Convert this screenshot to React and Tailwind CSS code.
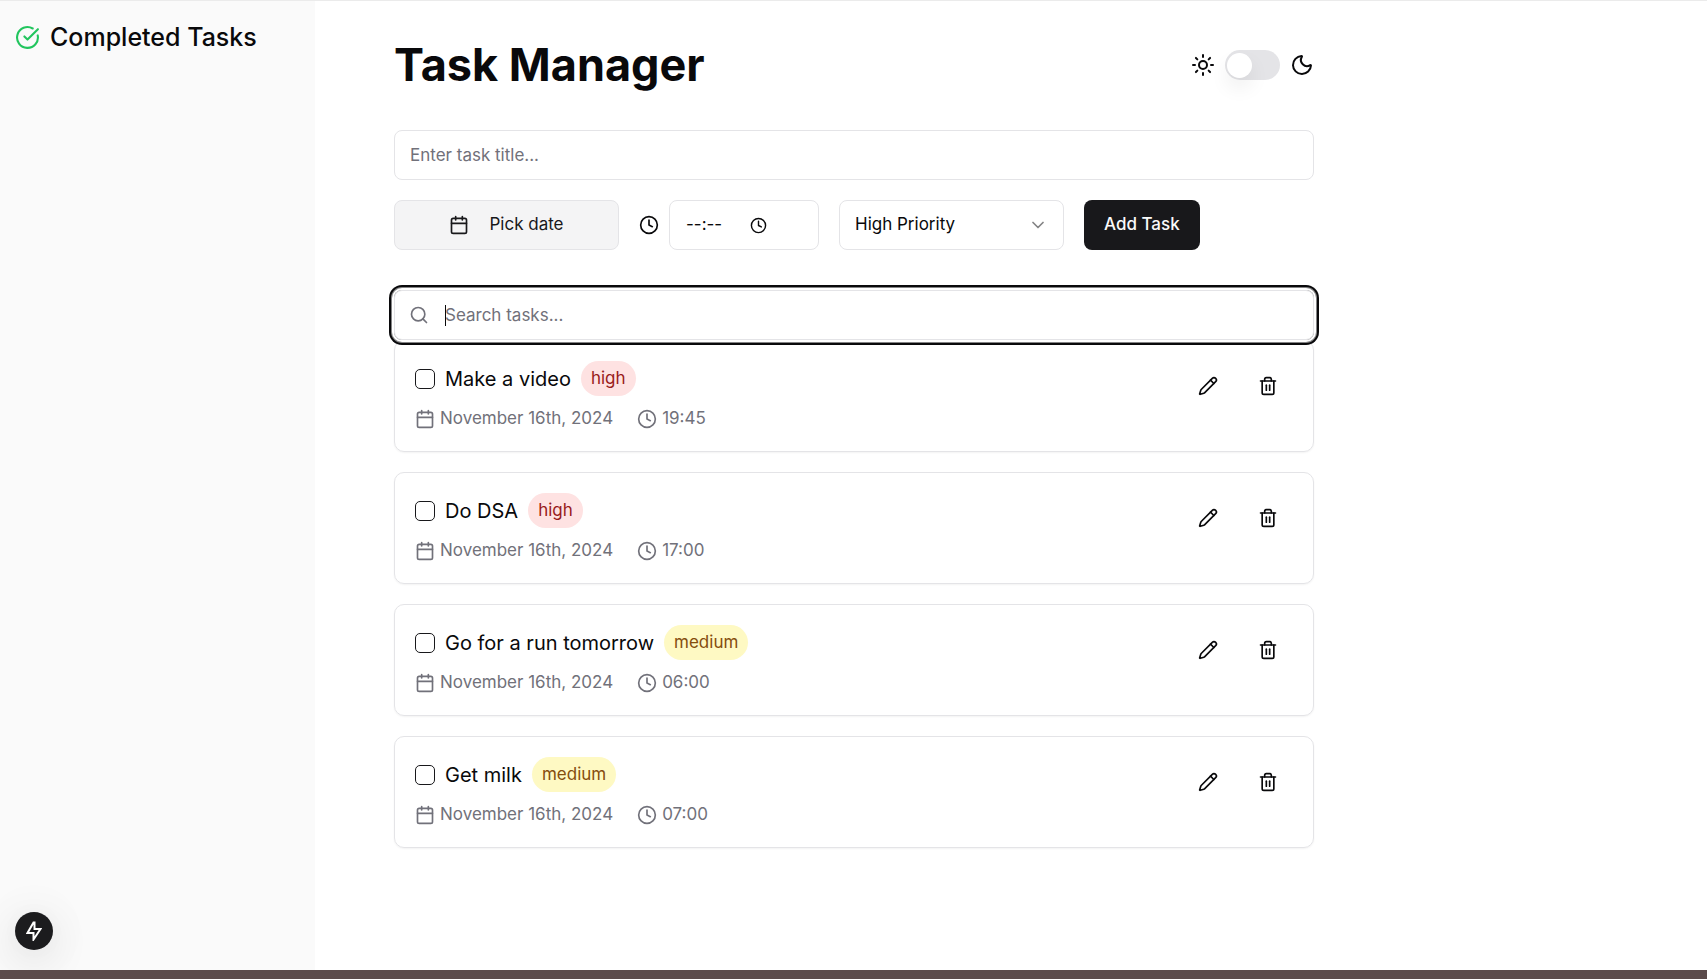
import {
  Calendar,
  ChevronDown,
  CircleCheckBig,
  Clock,
  Moon,
  Pencil,
  Search,
  Sun,
  Trash2,
} from "lucide-react";

const tasks = [
  { id: 1, title: "Make a video", priority: "high", date: "November 16th, 2024", time: "19:45" },
  { id: 2, title: "Do DSA", priority: "high", date: "November 16th, 2024", time: "17:00" },
  { id: 3, title: "Go for a run tomorrow", priority: "medium", date: "November 16th, 2024", time: "06:00" },
  { id: 4, title: "Get milk", priority: "medium", date: "November 16th, 2024", time: "07:00" },
];

const badgeStyles = {
  high: "bg-[#fee2e2] text-[#991b1b]",
  medium: "bg-[#fef9c3] text-[#854d0e]",
};

function ThemeSwitch() {
  return (
    <div className="flex items-center gap-2.5">
      <Sun className="size-6" />
      <button
        type="button"
        role="switch"
        aria-checked="false"
        aria-label="Dark mode"
        className="flex h-[30px] w-[55px] items-center rounded-full bg-[#e4e4e7] px-0.5"
      >
        <span className="size-[25px] rounded-full bg-white shadow-[0_10px_20px_rgba(0,0,0,0.07)]" />
      </button>
      <Moon className="size-6" />
    </div>
  );
}

function TaskForm() {
  return (
    <form className="flex flex-col gap-5">
      <input
        type="text"
        aria-label="Task title"
        placeholder="Enter task title..."
        className="h-[50px] w-full rounded-lg border border-[#e4e4e7] px-[15px] text-[17px] outline-none placeholder:text-[#71717a]"
      />
      <div className="flex flex-wrap gap-5">
        <button
          type="button"
          className="flex h-[50px] w-[225px] items-center justify-center gap-5 rounded-lg border border-[#e4e4e7] bg-[#f4f4f5] text-[17px] text-[#18181b]"
        >
          <Calendar className="size-5" />
          Pick date
        </button>
        <label className="flex items-center gap-2.5">
          <Clock className="size-5" />
          <span className="flex h-[50px] w-[150px] items-center rounded-lg border border-[#e4e4e7] px-4">
            <input
              type="text"
              aria-label="Task time"
              placeholder="--:--"
              className="w-16 text-[17px] outline-none placeholder:text-[#09090b]"
            />
            <Clock className="size-[17px]" />
          </span>
        </label>
        <div className="relative">
          <select
            aria-label="Priority"
            defaultValue="high"
            className="h-[50px] w-[225px] appearance-none rounded-lg border border-[#e4e4e7] bg-white px-[15px] text-[17px]"
          >
            <option value="high">High Priority</option>
            <option value="medium">Medium Priority</option>
            <option value="low">Low Priority</option>
          </select>
          <ChevronDown className="pointer-events-none absolute top-[15px] right-4 size-5 opacity-50" />
        </div>
        <button
          type="button"
          className="h-[50px] rounded-lg bg-[#18181b] px-5 text-[17px] font-medium text-[#fafafa]"
        >
          Add Task
        </button>
      </div>
    </form>
  );
}

function SearchBox() {
  return (
    <div className="relative">
      <Search className="absolute top-[15px] left-[15px] size-5 text-[#71717a]" />
      <input
        type="text"
        aria-label="Search tasks"
        placeholder="Search tasks..."
        className="h-[50px] w-full rounded-lg border border-[#e4e4e7] pr-[15px] pl-[50px] text-[17px] shadow-[0_0_0_2px_#fff,0_0_0_3px_#848485,0_0_0_5px_#09090b] outline-none placeholder:text-[#71717a]"
      />
      <span className="absolute top-[15px] left-[51px] h-[21px] w-px bg-[#09090b]" />
    </div>
  );
}

function TaskCard({ task }) {
  const inputId = `task-${task.id}`;
  return (
    <li className="flex items-start justify-between rounded-[10px] border border-[#e4e4e7] p-5 shadow-xs">
      <div className="flex flex-col gap-2.5">
        <div className="flex items-center gap-2.5">
          <input
            id={inputId}
            type="checkbox"
            className="size-5 appearance-none rounded-[5px] border border-[#18181b]"
          />
          <label htmlFor={inputId} className="text-xl">
            {task.title}
          </label>
          <span className={`rounded-full px-2.5 py-[5px] text-[17px] leading-[25px] ${badgeStyles[task.priority]}`}>
            {task.priority}
          </span>
        </div>
        <div className="flex items-center gap-6 text-[17px] leading-[25px] text-[#71717a]">
          <span className="flex items-center gap-[5px]">
            <Calendar className="size-5" />
            {task.date}
          </span>
          <span className="flex items-center gap-[5px]">
            <Clock className="size-5" />
            {task.time}
          </span>
        </div>
      </div>
      <div className="flex gap-2.5">
        <button type="button" aria-label={`Edit ${task.title}`} className="flex size-[50px] items-center justify-center">
          <Pencil className="size-5" />
        </button>
        <button type="button" aria-label={`Delete ${task.title}`} className="flex size-[50px] items-center justify-center">
          <Trash2 className="size-5" />
        </button>
      </div>
    </li>
  );
}

export default function App() {
  return (
    <div className="flex min-h-screen flex-col bg-white font-['Inter',sans-serif] text-[#09090b]">
      <div className="flex flex-1 border-t border-[#ebebeb]">
        <aside className="flex w-[315px] shrink-0 flex-col justify-between overflow-hidden bg-[#fafafa] px-[15px] pt-[19px] pb-5">
          <h2 className="flex items-center gap-2.5 text-[25px] leading-[35px] font-medium">
            <CircleCheckBig className="size-[25px] text-[#22c55e]" />
            Completed Tasks
          </h2>
          <button
            type="button"
            aria-label="Static route"
            className="flex size-[38px] items-center justify-center rounded-full bg-[#1c1c1e] text-white shadow-[0_10px_40px_rgba(0,0,0,0.12),0_0_60px_rgba(0,0,0,0.06)]"
          >
            <svg viewBox="0 0 16 20" className="h-5 w-4" fill="none" stroke="currentColor" strokeWidth="2">
              <path d="M7.5 1.5 1.5 12h6v6.5L14.5 8h-6V1.5Z" />
            </svg>
          </button>
        </aside>
        <main className="min-w-0 flex-1 px-[79px] pt-[39px]">
          <div className="max-w-[920px]">
            <header className="mb-10 flex items-center justify-between">
              <h1 className="text-[45px] leading-[50px] font-bold">Task Manager</h1>
              <ThemeSwitch />
            </header>
            <TaskForm />
            <div className="mt-10">
              <SearchBox />
              <ul className="flex flex-col gap-5">
                {tasks.map((task) => (
                  <TaskCard key={task.id} task={task} />
                ))}
              </ul>
            </div>
          </div>
        </main>
      </div>
      <div className="h-[9px] bg-[#5b4b4b]" />
    </div>
  );
}
